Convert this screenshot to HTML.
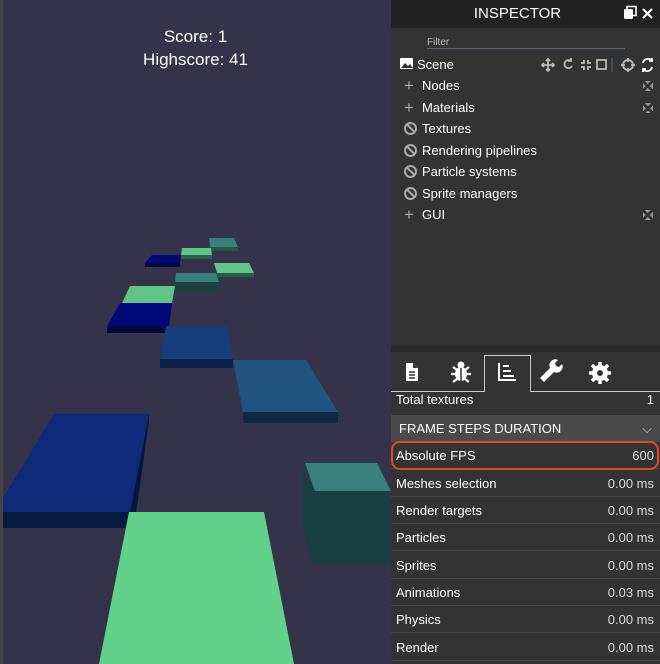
<!DOCTYPE html>
<html><head><style>
*{margin:0;padding:0;box-sizing:border-box}
body{width:660px;height:664px;overflow:hidden;background:#34334a;font-family:"Liberation Sans",sans-serif;position:relative}
.score{position:absolute;left:0;width:391px;text-align:center;color:#fff;font-size:17px}
#panel{position:absolute;left:391px;top:0;width:269px;height:664px;background:#333;color:#fff;font-size:13px}
.hdr{height:28px;background:#222;text-align:center;line-height:28px;font-size:15px;padding-right:16px}
.row{position:absolute;left:0;width:269px;height:21px;line-height:21px}
.ico{position:absolute;left:13px;color:#aaa;font-size:17px}
.no{position:absolute;left:13px;top:4px;width:13px;height:13px;border:2px solid #aaa;border-radius:50%}
.no:after{content:"";position:absolute;left:4px;top:-1px;width:2px;height:11px;background:#aaa;transform:rotate(-45deg)}
.lbl{position:absolute;left:31px}
.st{position:absolute;left:0;width:269px;height:27px;line-height:27px;border-bottom:1px solid #444;padding-left:5px}
.st span{position:absolute;right:6px;color:#ddd}
.sq{position:absolute;right:7px;top:6px;width:10px;height:10px;background:
 linear-gradient(45deg,transparent 40%,#333 40%,#333 60%,transparent 60%),
 linear-gradient(-45deg,transparent 40%,#333 40%,#333 60%,transparent 60%),#999}
</style></head><body>
<svg width="391" height="664" style="position:absolute;left:0;top:0">
<rect x="0" y="0" width="3" height="664" fill="#444"/>
<polygon points="209,238 234,238 238,247 210,247" fill="#38807c"/><rect x="210" y="247" width="28" height="4" fill="#1f5a44"/>
<polygon points="182,248 211,248 212,255 181,255" fill="#5ec487"/><rect x="181" y="255" width="31" height="4" fill="#25604a"/>
<polygon points="152,255 181,255 180,263 145,263" fill="#00087a"/><rect x="145" y="263" width="35" height="4" fill="#000a40"/>
<polygon points="214,263 249,263 254,273 217,273" fill="#5ec487"/><rect x="217" y="273" width="37" height="4" fill="#25604a"/>
<polygon points="176,273 216,273 219,282 175,282" fill="#38807c"/><rect x="175" y="282" width="44" height="9" fill="#1a4040"/>
<polygon points="130,286 175,286 172,303 122,303" fill="#5ec487"/>
<polygon points="120,303 172,303 169,326 107,326" fill="#00087a"/><rect x="107" y="326" width="60" height="7" fill="#000a3e"/>
<polygon points="166,326 227,326 233,359 160,359" fill="#163e7c"/><rect x="160" y="359" width="73" height="9" fill="#0a2044"/>
<polygon points="233,360 306,360 338,412 243,412" fill="#21547e"/><polygon points="233,360 243,412 243,423 338,423 338,412 243,412" fill="#0d2a40"/>
<polygon points="54,414 149,414 130,512 3,512 3,498" fill="#0e2a78"/><polygon points="149,414 149,420 134,528 130,512" fill="#041640"/>
<rect x="3" y="512" width="126" height="16" fill="#061a40"/>
<polygon points="129,512 264,512 294,664 99,664" fill="#62d28a"/>
<polygon points="305,463 377,463 391,491 315,491" fill="#38807c"/>
<polygon points="303,470 315,491 391,491 391,563 313,563 303,528" fill="#184042"/>
</svg>
<div class="score" style="top:27px">Score: 1</div>
<div class="score" style="top:50px">Highscore: 41</div>
<div id="panel">
<div class="hdr">INSPECTOR</div>
<svg width="269" height="28" style="position:absolute;left:0;top:0">
<rect x="233" y="9" width="9" height="10" rx="1.5" fill="#fff"/><path d="M236 9V6.5h9v9h-3" stroke="#fff" stroke-width="1.6" fill="none"/>
<path d="M252 9l9 9M261 9l-9 9" stroke="#fff" stroke-width="2"/>
</svg>
<div style="position:absolute;left:36px;top:37px;font-size:10px;color:#bbb">Filter</div>
<div style="position:absolute;left:36px;top:48px;width:198px;height:1px;background:#4a6a8a"></div>
<div class="row" style="top:54px"><span style="position:absolute;left:26px">Scene</span></div>
<svg width="269" height="20" style="position:absolute;left:0;top:55px" fill="none" stroke="#bbb" stroke-width="1.8">
<rect x="9" y="3" width="13" height="11" rx="1" fill="#fff" stroke="none"/><path d="M10 13l4-5 3 3 2-2 3 4z" fill="#333" stroke="none"/>
<path d="M157 4v12M151 10h12M155 6l2-2 2 2M155 14l2 2 2-2M153 8l-2 2 2 2M161 8l2 2-2 2"/>
<path d="M180 6a4 4 0 1 0 1 5M180 3v3h-3"/>
<path d="M193 5v3h-3M197 5v3h3M193 15v-3h-3M197 15v-3h3"/>
<rect x="206" y="5" width="9" height="9"/><path d="M221 3v14" stroke="#4a6a8a" stroke-width="1"/>
<circle cx="237" cy="10" r="5"/><path d="M237 3v4M237 13v4M230 10h4M240 10h4"/>
<path d="M252 8a5 5 0 0 1 9-2M261 12a5 5 0 0 1-9 2M261 3v3h-3M252 17v-3h3" stroke="#fff"/>
</svg>
<div class="row" style="top:75px"><span class="ico">+</span><span class="lbl">Nodes</span><i class="sq"></i></div>
<div class="row" style="top:97px"><span class="ico">+</span><span class="lbl">Materials</span><i class="sq"></i></div>
<div class="row" style="top:118px"><i class="no"></i><span class="lbl">Textures</span></div>
<div class="row" style="top:140px"><i class="no"></i><span class="lbl">Rendering pipelines</span></div>
<div class="row" style="top:161px"><i class="no"></i><span class="lbl">Particle systems</span></div>
<div class="row" style="top:183px"><i class="no"></i><span class="lbl">Sprite managers</span></div>
<div class="row" style="top:204px"><span class="ico">+</span><span class="lbl">GUI</span><i class="sq"></i></div>
<div style="position:absolute;left:0;top:346px;width:269px;height:6px;background:#2a2a2a"></div>
<div style="position:absolute;left:93px;top:355px;width:47px;height:37px;border:1px solid #ccc;border-bottom:none;background:#333"></div>
<div style="position:absolute;left:0;top:391px;width:93px;height:1px;background:#ccc"></div>
<div style="position:absolute;left:140px;top:391px;width:129px;height:1px;background:#ccc"></div>
<svg width="269" height="40" style="position:absolute;left:0;top:352px">
<path d="M15 11h7l5 5v13H15z" fill="#fff"/><path d="M22 11v5h5" fill="#333"/><path d="M18 20h6M18 23h6M18 26h6" stroke="#333" stroke-width="1.4"/>
<g fill="#fff"><ellipse cx="70" cy="22" rx="6" ry="7"/><circle cx="70" cy="13" r="3.5"/></g>
<path d="M62 15l4 3M78 15l-4 3M60 22h5M75 22h5M62 30l4-3M78 30l-4-3" stroke="#fff" stroke-width="2.2"/><path d="M70 16v13" stroke="#333" stroke-width="1.5"/>
<path d="M108 11v17h17M112 14h6M112 19h8M112 24h11" stroke="#fff" stroke-width="2" fill="none"/>
<path d="M153 30l10-10a6 6 0 0 0 8-8l-3 3-3-1-1-3 3-3a6 6 0 0 0-8 8l-10 10z" fill="#fff"/>
<circle cx="209" cy="21" r="8" fill="#fff"/><circle cx="209" cy="21" r="3" fill="#333"/>
<g stroke="#fff" stroke-width="3.5"><path d="M209 10v22M198 21h22M201 13l16 16M217 13l-16 16"/></g><circle cx="209" cy="21" r="3" fill="#333"/>
</svg>
<div style="position:absolute;top:392px;left:5px">Total textures</div><div style="position:absolute;top:392px;right:6px">1</div>
<div style="position:absolute;top:415px;left:0;width:269px;height:27px;background:#4a4a4a;line-height:27px;padding-left:8px">FRAME STEPS DURATION<span style="position:absolute;right:8px;color:#ccc">⌵</span></div>
<div class="st" style="top:442px">Absolute FPS<span>600</span></div>
<div style="position:absolute;left:0;top:441px;width:268px;height:29px;border:2px solid #e04a2a;border-radius:9px"></div>
<div class="st" style="top:470px">Meshes selection<span>0.00 ms</span></div>
<div class="st" style="top:497px">Render targets<span>0.00 ms</span></div>
<div class="st" style="top:524px">Particles<span>0.00 ms</span></div>
<div class="st" style="top:552px">Sprites<span>0.00 ms</span></div>
<div class="st" style="top:579px">Animations<span>0.03 ms</span></div>
<div class="st" style="top:606px">Physics<span>0.00 ms</span></div>
<div class="st" style="top:634px">Render<span>0.00 ms</span></div>
</div>
</body></html>
